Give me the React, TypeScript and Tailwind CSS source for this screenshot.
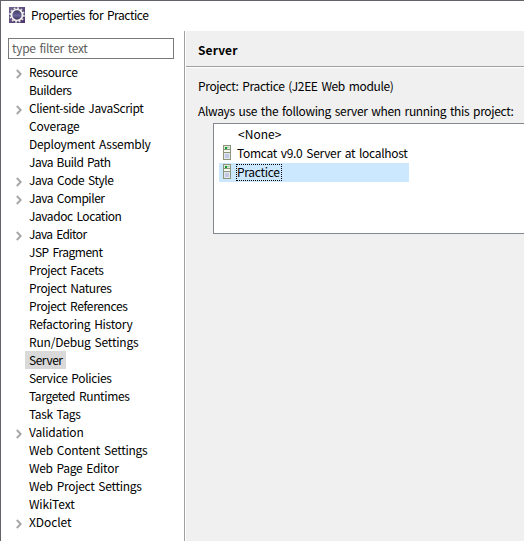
import { useLayoutEffect, useRef, useState } from "react";

/** Single-line label whose tracking is adjusted to fill a given width. */
function Label({ text, width, className = "" }: { text: string; width: number; className?: string }) {
  const ref = useRef<HTMLSpanElement>(null);
  const [spacing, setSpacing] = useState(0);
  useLayoutEffect(() => {
    const el = ref.current;
    if (!el) return;
    el.style.letterSpacing = "0px";
    setSpacing((width - 0.5 - el.getBoundingClientRect().width) / text.length);
    el.style.letterSpacing = "";
  }, [text, width]);
  return (
    <span ref={ref} className={`inline-block whitespace-pre [word-spacing:1.5px] ${className}`} style={{ letterSpacing: `${spacing}px` }}>
      {text}
    </span>
  );
}

type Node = { name: string; width: number; expandable?: boolean; selected?: boolean };

const nodes: Node[] = [
  { name: "Resource", width: 49, expandable: true },
  { name: "Builders", width: 43 },
  { name: "Client-side JavaScript", width: 115, expandable: true },
  { name: "Coverage", width: 51 },
  { name: "Deployment Assembly", width: 122 },
  { name: "Java Build Path", width: 82 },
  { name: "Java Code Style", width: 85, expandable: true },
  { name: "Java Compiler", width: 76, expandable: true },
  { name: "Javadoc Location", width: 93 },
  { name: "Java Editor", width: 58, expandable: true },
  { name: "JSP Fragment", width: 74 },
  { name: "Project Facets", width: 75 },
  { name: "Project Natures", width: 83 },
  { name: "Project References", width: 99 },
  { name: "Refactoring History", width: 104 },
  { name: "Run/Debug Settings", width: 110 },
  { name: "Server", width: 34, selected: true },
  { name: "Service Policies", width: 83 },
  { name: "Targeted Runtimes", width: 101 },
  { name: "Task Tags", width: 52 },
  { name: "Validation", width: 55, expandable: true },
  { name: "Web Content Settings", width: 119 },
  { name: "Web Page Editor", width: 90 },
  { name: "Web Project Settings", width: 113 },
  { name: "WikiText", width: 46 },
  { name: "XDoclet", width: 43, expandable: true },
];

function Chevron() {
  return (
    <svg width="6" height="10" viewBox="0 0 6 10" className="mt-[3px]" fill="none" stroke="#a6a6a6" strokeWidth="1.9">
      <path d="M0.8 1L4.7 5L0.8 9" />
    </svg>
  );
}

function EclipseIcon() {
  return (
    <svg width="16" height="16" viewBox="0 0 16 16">
      <defs>
        <linearGradient id="tile" x1="0" y1="0" x2="1" y2="1">
          <stop offset="0" stopColor="#70658f" />
          <stop offset="1" stopColor="#4a3269" />
        </linearGradient>
        <linearGradient id="core" x1="0" y1="0" x2="0" y2="1">
          <stop offset="0" stopColor="#39345c" />
          <stop offset="0.55" stopColor="#6b6399" />
          <stop offset="1" stopColor="#302a49" />
        </linearGradient>
      </defs>
      <rect width="16" height="16" fill="url(#tile)" />
      <circle cx="8" cy="8" r="6.8" fill="none" stroke="#e2e0e4" strokeWidth="1.9" strokeDasharray="1.78 1.78" />
      <circle cx="8" cy="8" r="5.5" fill="url(#core)" stroke="#f2f1ee" strokeWidth="1.7" />
    </svg>
  );
}

function ServerIcon() {
  return (
    <svg width="8" height="15" viewBox="0 0 8 15" shapeRendering="crispEdges" className="mt-px shrink-0">
      <rect width="8" height="15" rx="0.5" fill="#8c957b" />
      <rect x="1" y="1" width="6" height="3" fill="#dce8da" />
      <rect x="2" y="2" width="2" height="2" fill="#159a2d" />
      <rect x="4" y="2" width="2" height="1" fill="#9ccd9f" />
      <rect x="1" y="5" width="6" height="2" fill="#f8faf4" />
      <rect x="1" y="8" width="6" height="6" fill="#e2e7ee" />
      <rect x="2" y="9" width="4" height="4" fill="#c3c9e4" />
    </svg>
  );
}

export default function App() {
  return (
    <div className="flex h-[541px] w-[524px] flex-col overflow-hidden border-l border-t border-[#65636a] bg-white font-['Noto_Sans_CJK_KR','Noto_Sans',sans-serif] text-[12px] leading-[18px] text-black">
      <header className="flex h-[30px] shrink-0 items-start gap-[6px] pl-2 pt-[6px]">
        <EclipseIcon />
        <Label text="Properties for Practice" width={118} className="-mt-px" />
      </header>
      <div className="flex min-h-0 flex-1">
        <aside className="w-[183px] shrink-0 pt-[7px]">
          <div className="ml-[7px] flex h-[21px] w-[166px] items-start border border-[#7a7a7a] pl-[3px] text-[#606060]">
            <Label text="type filter text" width={76} />
          </div>
          <ul className="mt-1">
            {nodes.map((node) => (
              <li key={node.name} className="flex h-[18px] items-center pl-[15px]">
                <span className="flex w-[9px] shrink-0">{node.expandable && <Chevron />}</span>
                <span className={`h-[18px] pl-1 pr-[3px] ${node.selected ? "bg-[#d9d9d9]" : ""}`}>
                  <Label text={node.name} width={node.width} />
                </span>
              </li>
            ))}
          </ul>
        </aside>
        <main className="min-w-0 flex-1 border-l border-[#a0a0a0]">
          <div className="flex h-full flex-col border-l border-white bg-[#f0f0f0]">
            <div className="h-9 shrink-0 border-b border-[#a0a0a0] pl-3 pt-[10px] font-bold">
              <Label text="Server" width={40} />
            </div>
            <div className="h-px shrink-0 bg-white" />
            <div className="flex flex-col pl-3 pt-[9px]">
              <div className="h-[25px]">
                <Label text="Project: Practice (J2EE Web module)" width={196} />
              </div>
              <div className="h-[21px]">
                <Label text="Always use the following server when running this project:" width={316} />
              </div>
            </div>
            <div className="ml-[27px] h-[111px] shrink-0 border border-r-0 border-[#828790] bg-white pl-[5px] pt-px">
              <div className="flex h-[19px] w-[190px] items-start pl-[19px]">
                <Label text="<None>" width={44} />
              </div>
              <div className="flex h-[19px] w-[190px] items-start pl-1">
                <ServerIcon />
                <Label text="Tomcat v9.0 Server at localhost" width={171} className="ml-[6px]" />
              </div>
              <div className="flex h-[19px] w-[190px] items-start bg-[#cce8ff] pl-1">
                <ServerIcon />
                <span className="ml-[5px] mt-px h-[17px] border border-dotted border-black pr-px leading-[14px]">
                  <Label text="Practice" width={43} />
                </span>
              </div>
            </div>
          </div>
        </main>
      </div>
    </div>
  );
}
